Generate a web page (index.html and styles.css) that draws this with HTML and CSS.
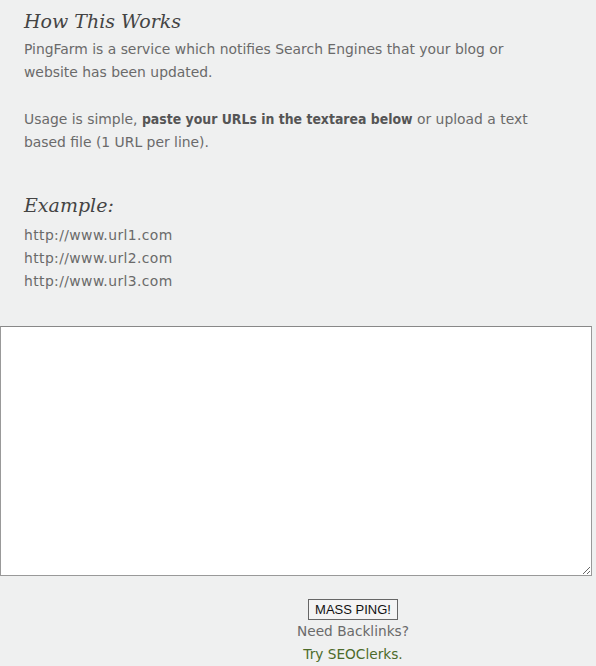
FILE: index.html
```html
<!DOCTYPE html>
<html>
<head>
<meta charset="utf-8">
<link rel="stylesheet" href="styles.css">
</head>
<body>
<div class="page">
  <section class="info">
    <h2 class="title">How This Works</h2>
    <p class="text">PingFarm is a service which notifies Search Engines that your blog or website has been updated.</p>
    <p class="text">Usage is simple, <strong>paste your URLs in the textarea below</strong> or upload a text based file (1 URL per line).</p>
    <h2 class="title example">Example:</h2>
    <p class="text urls">http://www.url1.com<br>http://www.url2.com<br>http://www.url3.com</p>
  </section>
  <textarea class="urlbox"></textarea>
  <div class="actions">
    <button class="ping">MASS PING!</button>
    <span class="need">Need Backlinks?</span>
    <a class="try">Try SEOClerks.</a>
  </div>
</div>
</body>
</html>
```
FILE: styles.css
```css
html, body { margin: 0; padding: 0; }
body {
  background: #eff0f0;
  font-family: "DejaVu Sans", sans-serif;
  color: #6a6a6a;
  width: 596px;
  height: 666px;
  overflow: hidden;
}
.page { display: flex; flex-direction: column; }
.info { padding: 0 24px; width: 515px; }
.title {
  font-family: "DejaVu Serif", serif;
  font-style: italic;
  font-weight: normal;
  font-size: 19px;
  color: #444;
  margin: 8px 0 4px;
  line-height: 26px;
}
.example { margin-top: 38px; margin-bottom: 6px; }
.text { font-size: 13.9px; line-height: 23px; margin: 0 0 24px; }
.text strong { color: #555; font-family: "DejaVu Sans Condensed", "DejaVu Sans", sans-serif; font-stretch: condensed; }
.urls { margin-bottom: 0; letter-spacing: 0.4px; }
.urlbox {
  display: block;
  margin: 33px 0 0;
  width: 592px;
  height: 250px;
  box-sizing: border-box;
  border: 1px solid #999;
  border-top-color: #888;
  background: #fff;
}
.actions {
  display: flex;
  flex-direction: column;
  align-items: center;
  padding-left: 110px;
  margin-top: 23px;
}
.ping {
  font-family: "Liberation Sans", sans-serif;
  font-size: 13px;
  color: #111;
  background: #f4f4f4;
  border: 1px solid #666;
  padding: 2px 6px;
  border-radius: 0;
}
.need { font-size: 13.7px; line-height: 23px; margin-top: 0; }
.try { font-size: 13.7px; line-height: 23px; color: #4d6b2a; }
```
